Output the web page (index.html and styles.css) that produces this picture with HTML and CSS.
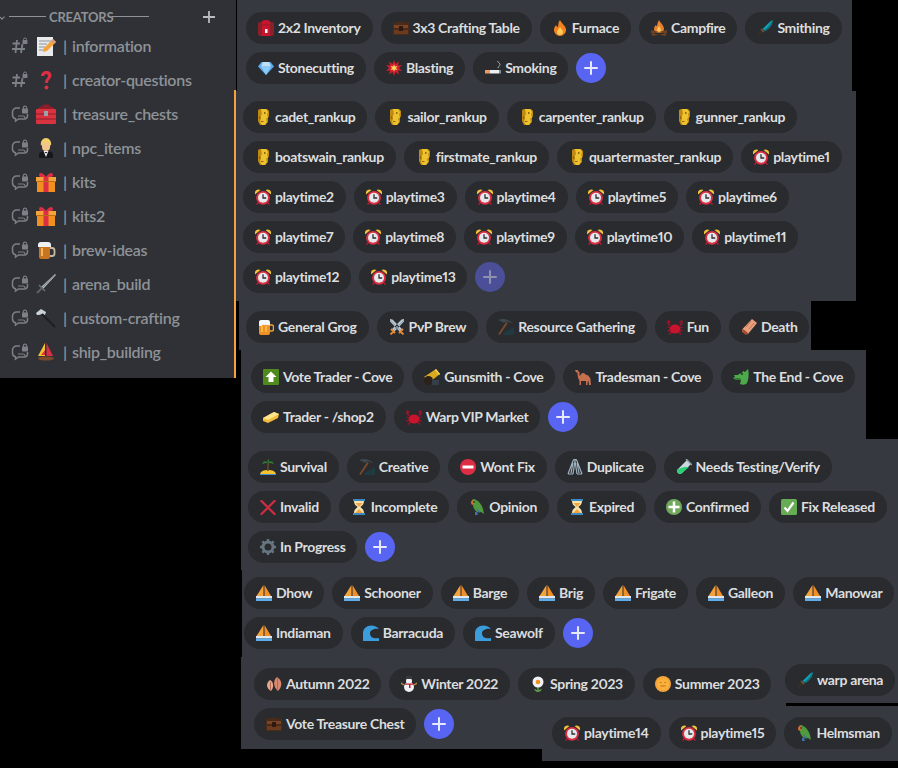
FILE: index.html
```html
<!DOCTYPE html>
<html lang="en">

<head>
    <meta charset="UTF-8">
    <title>forum tags</title>
    <link rel="stylesheet" href="styles.css">
</head>

<body>
    <svg class="defs" xmlns="http://www.w3.org/2000/svg">
        <symbol id="i-pack" viewBox="0 0 16 16"><path d="M3 4C3 1 5 0 8 0s5 1 5 4v12H3z" fill="#c8142c"/><rect x="0" y="2" width="4" height="14" rx="2" fill="#8c1f2a"/><rect x="12" y="2" width="4" height="14" rx="2" fill="#8c1f2a"/><rect x="7" y="9" width="2.500" height="4" fill="#fff"/><path d="M4 5h8" stroke="#8c1f2a"/></symbol>
        <symbol id="i-chest" viewBox="0 0 16 16"><rect x="0" y="2" width="16" height="13" fill="#4a2a18"/><rect x="1" y="5" width="14" height="3" fill="#7a4526"/><rect x="1" y="10" width="14" height="4" fill="#6b3b20"/><rect x="6" y="6" width="4" height="5" fill="#2e1a10"/><path d="M1 0h3v3H1zM12 0h3v3h-3z" fill="#2b2b2b"/></symbol>
        <symbol id="i-fire" viewBox="0 0 16 16"><path d="M8 0c1 3 5 5 6 9 .6 4-3 7-6 7s-6.500-3-6-7c.3-2 1.500-3 2-4 .5 1 1 2 2 2C6.500 5 6 2 8 0z" fill="#f4811f"/><path d="M8 7c1 2 3 3 3 5s-1.500 3-3 3-3-1-3-3 2-3 3-5z" fill="#fdcb58"/></symbol>
        <symbol id="i-camp" viewBox="0 0 16 16"><path d="M8 0c.5 2 5 5 5 9 0 2-2 4-5 4s-5-2-5-4c0-2 1-3 2-4 0 1 .5 1 1 1 0-2 1-4 2-6z" fill="#e9822c"/><path d="M8 6c.5 1 2 2.500 2 4s-1 2-2 2-2-.5-2-2 1.500-3 2-4z" fill="#fbc15a"/><path d="M0 14l16-4v3L2 16zM16 14L0 10v3l14 3z" fill="#6e4024"/></symbol>
        <symbol id="i-sword" viewBox="0 0 16 16"><path d="M15.500 0c.500 4-1.500 7-7 11L5.500 9C9 6 12 2 15.500 0z" fill="#12a0b4"/><path d="M15.500 0c0 4-2 7-7 11l-1-1c4-3 6-6 8-10z" fill="#0b6f80"/><path d="M5 9l2 2-5 5-1-1z" fill="#3a2f24"/><path d="M4 9l3 3" stroke="#6b5a3c" stroke-width="1.500"/></symbol>
        <symbol id="i-gem" viewBox="0 0 16 16"><path d="M3.500 2h9L16 6.500 8 15 0 6.500z" fill="#5dadec"/><path d="M5 2h6l2 4.500H3z" fill="#bde0f7"/><path d="M3 6.500h10L8 15z" fill="#8ccaf7"/></symbol>
        <symbol id="i-blast" viewBox="0 0 16 16"><path d="M8 0l1.500 4L13 1.500 12 5.500 16 5l-3 3 3 3-4-.5 1 4-3.500-2.500L8 16l-1.500-4L3 14.500l1-4-4 .5 3-3-3-3 4 .5-1-4L6.500 4z" fill="#d0202e"/><path d="M8 4.500l1 2 2.500-.5L10 8l1.500 2L9 9.500 8 11.500 7 9.500 4.500 10 6 8 4.500 6 7 6.500z" fill="#ffcf5c"/></symbol>
        <symbol id="i-smoke" viewBox="0 0 16 16"><rect x="0" y="10" width="5" height="3.500" fill="#f19a5e"/><rect x="5" y="10" width="9" height="3.500" fill="#eceff1"/><rect x="14" y="10" width="2" height="3.500" fill="#8a8d90"/><path d="M13 8c0-2 2-1.500 2-3.500S12 2 12.500 1" fill="none" stroke="#aab0b5" stroke-width="1"/></symbol>
        <symbol id="i-gold" viewBox="0 0 16 16"><path d="M3 1l2-1h7l2 2v5l-1 2v4l-3 3H5l-1-2-1-2V3z" fill="#c08a12"/><path d="M6 0h5l2 3-1 3 1 2-2 2 1 3-2 3H7l-2-3 1-3-1-2 2-3z" fill="#eec22e"/><path d="M4 7h1.500v3H4zM9 3h1.500v2H9zM6 12h2.500v1H6z" fill="#8f6810"/></symbol>
        <symbol id="i-clock" viewBox="0 0 16 16"><path d="M0 5.500a3.800 3.800 0 0 1 5.500-4.500zM16 5.500A3.800 3.800 0 0 0 10.500 1z" fill="#f5c33b"/><path d="M3 14l-1.500 1.500M13 14l1.500 1.500" stroke="#be1931" stroke-width="1.500"/><circle cx="8" cy="8.800" r="6.900" fill="#dd2e44"/><circle cx="8" cy="8.800" r="5" fill="#e6e9eb"/><path d="M8 5.300V9h3.200" fill="none" stroke="#292f33" stroke-width="1.300"/></symbol>
        <symbol id="i-beer" viewBox="0 0 16 16"><path d="M11 6h3a1.500 1.500 0 0 1 1.500 1.500v3A1.500 1.500 0 0 1 14 12h-3" fill="none" stroke="#f0a33a" stroke-width="1.500"/><path d="M1 4h11v10a2 2 0 0 1-2 2H3a2 2 0 0 1-2-2z" fill="#f19020"/><path d="M4 7v6M8 7v6" stroke="#fdcb58" stroke-width="1.300"/><path d="M1 6V2.500A2 2 0 0 1 3 1h7a2 2 0 0 1 2 2v3c-1 1-2 0-2-.5 0 1-2 1-2.500 0-.5 1-2 1-2.500 0-.5.5-1 1.500-2 1.500S1 7 1 6z" fill="#f5f8fa"/></symbol>
        <symbol id="i-swords" viewBox="0 0 16 16"><path d="M1 0l2.500.5L13 10l-2.500 2.500L1 2.500zM15 0l-2.500.5L3 10l2.500 2.500L15 2.500z" fill="#b9c6d0"/><path d="M1 1l11 11M15 1L4 12" stroke="#8fa0ad" stroke-width=".8"/><path d="M2 10l4 4M14 10l-4 4M4 13l-2.500 2.500M12 13l2.500 2.500" stroke="#e98a35" stroke-width="1.800"/></symbol>
        <symbol id="i-pick" viewBox="0 0 16 16"><path d="M5 14l11-6v8H6z" fill="#1f3a40"/><path d="M0 1C5-1 11 0 15 5c-3-2-5-2.500-7-2.500L6 4C4 2.500 2 2 0 1z" fill="#3d4a50"/><path d="M1 15.500L9 3.500" stroke="#7c4a2b" stroke-width="1.800"/></symbol>
        <symbol id="i-crab" viewBox="0 0 16 16"><ellipse cx="8" cy="10" rx="5.500" ry="4.500" fill="#c8142c"/><path d="M1 1c-1.500 2-1 5 2 6l.5-1.500C2.500 5 2 4 2.500 3L4 4c0-1.500-1-2.500-3-3zM15 1c1.500 2 1 5-2 6l-.5-1.500c1-.5 1.500-1.500 1-2.500L12 4c0-1.500 1-2.500 3-3z" fill="#a0122a"/><path d="M3 9L.5 8M3 11.500L.5 12M4 13.500L2 15.500M13 9l2.500-1M13 11.500l2.500.5M12 13.500l2 2" stroke="#a0122a" stroke-width="1.300"/></symbol>
        <symbol id="i-coffin" viewBox="0 0 16 16"><path d="M11 0l5 4L7 15H4L1 12.500 1.500 10z" fill="#e8a07c"/><path d="M5 8l5-6M8 10l5-6" stroke="#c9744f" stroke-width="1"/><path d="M1 12l3 3.500h3L7 14l-3-2.500-2.500-1.500z" fill="#a44a2e"/></symbol>
        <symbol id="i-up" viewBox="0 0 16 16"><rect width="16" height="16" rx="1" fill="#4f8a1f"/><path d="M8 2.500L13.500 8H10.500v5h-5V8H2.500z" fill="#fff"/></symbol>
        <symbol id="i-cannon" viewBox="0 0 16 16"><path d="M0 8L12 0l4 5-9 7z" fill="#d9aa20"/><path d="M11 1l4 5 1-1-4-5z" fill="#f2d35a"/><circle cx="4.500" cy="11.500" r="4.500" fill="#2c221a"/><rect x="8" y="11" width="7" height="5" fill="#33404a"/></symbol>
        <symbol id="i-camel" viewBox="0 0 16 16"><path d="M0 1h3v1l1.500 1v4c1 0 1.500-3 3.500-3s2.500 2 3.500 2 1.500 0 2.500 1.500 1.500 2 1.500 3l.5 5.500H14l-.5-4-1 1v3H11v-4H6v4H4.500v-4.500C3 10 2.500 7 2.500 3.500H1z" fill="#c66f4e"/></symbol>
        <symbol id="i-dragon" viewBox="0 0 16 16"><path d="M15 0c1 3 1 10-1 14-1 2-5 2-7 1l1-4c-3 0-6 0-8-2l2-1-1-2h4l1-1 3-1 1-2 2 1z" fill="#4ea94a"/><path d="M1 9l6 0 1 2H3z" fill="#2f7a34"/><circle cx="9" cy="5" r="1" fill="#163f1a"/></symbol>
        <symbol id="i-bar" viewBox="0 0 16 16"><path d="M0 9l11-6 5 2-1 4-10 5-5-2z" fill="#f4bc3c"/><path d="M0 9l11-6 5 2-11 6z" fill="#fce58a"/></symbol>
        <symbol id="i-island" viewBox="0 0 16 16"><path d="M0 16c0-4 4-5 8-5s8 1 8 5z" fill="#f4c430"/><path d="M0 15h16v1H0z" fill="#3f8fd0"/><path d="M7.500 4h1.500l-.5 8H7z" fill="#6b4a2a"/><path d="M8 4C6 1 3 2 2 5c2-1 4-1 6-1zM8 4c2-3 5-2 6 1-2-1-4-1-6-1zM8 4c-1-2-1-3 1-4 0 1 0 3-1 4z" fill="#2f7d32"/></symbol>
        <symbol id="i-noentry" viewBox="0 0 16 16"><circle cx="8" cy="8" r="8" fill="#dd2e44"/><rect x="2.500" y="6.500" width="11" height="3" fill="#fff"/></symbol>
        <symbol id="i-hands" viewBox="0 0 16 16"><path d="M1 15L6 2c.7-2 2.300-2 2 0L6 15M4 14l2-10M15 15L10 2C9.300 0 7.700 0 8 2l2 13M12 14L10 4M1 15h5M10 15h5" fill="none" stroke="#9fb3bf" stroke-width="1.200"/></symbol>
        <symbol id="i-tube" viewBox="0 0 16 16"><path d="M11 1l4 4L6 14a2.800 2.800 0 0 1-4-4z" fill="#ccd6dd"/><path d="M8 8h5l-7 6a2.800 2.800 0 0 1-4-4z" fill="#2fcf7a"/><path d="M10 0l6 6" stroke="#8fa0ad" stroke-width="1.500"/></symbol>
        <symbol id="i-cross" viewBox="0 0 16 16"><path d="M1.500 1L8 7.500 14.500 1 15.500 2 9 8.500l6.500 6.500-1 1L8 9.500 1.500 16 .5 15 7 8.500.5 2z" fill="#dd2e44" stroke="#dd2e44" stroke-width=".9"/></symbol>
        <symbol id="i-glass" viewBox="0 0 16 16"><rect x="2" y="0" width="12" height="2" fill="#3b88c3"/><rect x="2" y="14" width="12" height="2" fill="#3b88c3"/><path d="M3 2h10c0 4-3 5-3.500 6 .5 1 3.500 2 3.500 6H3c0-4 3-5 3.500-6C6 7 3 6 3 2z" fill="#f7e3b0"/><path d="M4.500 4h7L8 8zM8 10l4 4H4z" fill="#f4a43a"/></symbol>
        <symbol id="i-parrot" viewBox="0 0 16 16"><path d="M3 1a3 3 0 0 1 4 0c3 1 6 5 7 9l1 5-3-2c-2 1-5 0-6-2C4 9 4 6 4 5z" fill="#4f9a3d"/><path d="M2 4a2.500 2.500 0 0 1 3-3v4L3 6z" fill="#d96b36"/><path d="M7 9l5 4h-3zM6 13v3h3l-1-3z" fill="#3f6fb0"/><circle cx="5" cy="3" r=".8" fill="#111"/></symbol>
        <symbol id="i-plusg" viewBox="0 0 16 16"><circle cx="8" cy="8" r="8" fill="#70a85c"/><path d="M8 2.500v11M2.500 8h11" stroke="#fff" stroke-width="2.500"/></symbol>
        <symbol id="i-check" viewBox="0 0 16 16"><rect width="16" height="16" rx="1.500" fill="#67ab54"/><path d="M3.500 8.500L6.500 12 12.500 3.500" fill="none" stroke="#fff" stroke-width="2.200"/></symbol>
        <symbol id="i-gear" viewBox="0 0 16 16"><circle cx="8" cy="8" r="5" fill="none" stroke="#66757f" stroke-width="3"/><path d="M8 0v16M0 8h16M2.300 2.300l11.400 11.400M13.700 2.300L2.300 13.700" stroke="#66757f" stroke-width="2.400" stroke-dasharray="3 10 3"/></symbol>
        <symbol id="i-boat" viewBox="0 0 16 16"><path d="M7.500 0v11H.5z" fill="#f6a23b"/><path d="M8.500 0L15 11H8.500z" fill="#f18f2a"/><rect x="0" y="11" width="16" height="2.500" fill="#dfe8ee"/><rect x="0" y="13.500" width="16" height="2.500" fill="#5dadec"/></symbol>
        <symbol id="i-wave" viewBox="0 0 16 16"><path d="M16 4C13 0 6-1 2 3-1 6 0 11 0 16h16v-3c-4 1-9 0-9-5 0-3 5-5 9-4z" fill="#3c9ddc"/></symbol>
        <symbol id="i-leaves" viewBox="0 0 16 16"><path d="M11 1c5 3 6 9 1 14-5-4-5-11-1-14z" fill="#d98870"/><path d="M4 4c4 2 4 8 1 11C1 13-1 8 4 4z" fill="#e3a98f"/><path d="M11.500 2v13M4.500 6v9" stroke="#a85f49" stroke-width=".8"/></symbol>
        <symbol id="i-snow" viewBox="0 0 16 16"><circle cx="8" cy="11" r="5" fill="#f0f3f5"/><circle cx="8" cy="5" r="3" fill="#f0f3f5"/><rect x="5" y="0" width="6" height="3" fill="#33393d"/><rect x="4" y="7.500" width="8" height="1.200" fill="#c8142c"/><rect x="8" y="8" width="1.500" height="4" fill="#c8142c"/><path d="M3 9L0 7M13 9l3-2" stroke="#b98a3a" stroke-width="1.500"/></symbol>
        <symbol id="i-flower" viewBox="0 0 16 16"><path d="M8 10v6" stroke="#5c9e4a" stroke-width="1.500"/><path d="M4 13c2 0 3 1 4 2 1-1 2-2 4-2-1 2-2 3-4 3s-3-1-4-3z" fill="#5c9e4a"/><circle cx="8" cy="6" r="5.500" fill="#f0f2f3"/><circle cx="8" cy="6" r="2.300" fill="#f19020"/></symbol>
        <symbol id="i-sun" viewBox="0 0 16 16"><circle cx="8" cy="8" r="8" fill="#f4a43a" /><circle cx="8" cy="8" r="6" fill="#fbb03b"/><path d="M5 6.500h1.500M9.500 6.500H11M5.500 10h5" stroke="#b86f12" stroke-width="1"/></symbol>

        <symbol id="i-memo" viewBox="0 0 20 20"><rect x="1" y="1" width="16" height="19" fill="#e8eaec"/><path d="M3 5h12M3 8h8M3 11h6M3 14h5" stroke="#8a959d" stroke-width="1"/><path d="M17 3l3 3-9 9-4 1 1-4z" fill="#f4a43a"/><path d="M17 3l3 3-2 2-3-3z" fill="#d99e82"/></symbol>
        <symbol id="i-quest" viewBox="0 0 20 20"><path d="M5 6c0-3 2.500-5 5.500-5s5 2 5 4.500c0 3-3.500 4-3.500 7.500H9c0-4 3-5 3-7 0-1-.5-2-1.700-2C9 4 8.300 5 8.300 6z" fill="#dd2e44"/><circle cx="10.500" cy="17.500" r="2" fill="#dd2e44"/></symbol>
        <symbol id="i-toolbox" viewBox="0 0 20 20"><path d="M7 3V1h6v2M1 6l3-3h12l3 3" fill="#8c1f2a" stroke="#8c1f2a"/><rect y="5" width="20" height="15" rx="1" fill="#d9333f"/><path d="M0 10h20M0 15h20" stroke="#8c1f2a"/><rect x="8" y="7" width="4" height="5" fill="#9aa3a9"/></symbol>
        <symbol id="i-person" viewBox="0 0 20 20"><path d="M5 8c-1-5 2-8 5-8s6 3 5 8l-2-3H7z" fill="#f4d06a"/><path d="M6 5h8v4a4 4 0 0 1-8 0z" fill="#f3c48e"/><path d="M3 20v-3c0-3 3-4 7-4s7 1 7 4v3z" fill="#15171a"/><path d="M7.500 13h5L10 19z" fill="#eef1f3"/><path d="M8.500 14h3L10 15.500z" fill="#111"/></symbol>
        <symbol id="i-gift" viewBox="0 0 20 20"><path d="M10 5C7 0 3 0 3 3s4 2 7 2c3 0 7 1 7-2s-4-3-7 2z" fill="#dd2e44"/><rect x="0" y="5" width="20" height="5" fill="#f4a43a"/><rect x="1" y="9" width="18" height="11" fill="#f19020"/><rect x="7.500" y="5" width="5" height="15" fill="#dd2e44"/><path d="M0 9.500h20" stroke="#b86f12"/></symbol>
        <symbol id="i-mug" viewBox="0 0 20 20"><path d="M13 8h3a2.500 2.500 0 0 1 2.500 2.500v3A2.500 2.500 0 0 1 16 16h-3" fill="none" stroke="#c7b9a0" stroke-width="1.800"/><rect x="3" y="5" width="11" height="14" rx="2" fill="#c9741f"/><path d="M6 8v8" stroke="#f0b560" stroke-width="2"/><path d="M2 5a3 3 0 0 1 3-3h7a3 3 0 0 1 3 3v2H2z" fill="#eef1f3"/></symbol>
        <symbol id="i-dagger" viewBox="0 0 20 20"><path d="M19 0l1 1L7 15l-2-2z" fill="#b4bec5"/><path d="M19 .5L6 14" stroke="#68737b" stroke-width=".8"/><path d="M3 11l6 6" stroke="#6a7177" stroke-width="1.500"/><path d="M6 14l-5 5" stroke="#5b6167" stroke-width="2"/></symbol>
        <symbol id="i-hammer" viewBox="0 0 20 20"><path d="M0 5l5-4 5 3-1 3-3-1-3 1-2 0z" fill="#c9d2d8"/><path d="M6 6L19 19" stroke="#1d1f21" stroke-width="2"/></symbol>
        <symbol id="i-sail" viewBox="0 0 20 20"><path d="M9 1v13H2z" fill="#f4c430"/><path d="M10.500 1L17 14h-6.500z" fill="#dd2e44"/><path d="M5 13l4-5v5zM13 6l2 7h-3z" fill="#dd2e44"/><ellipse cx="10" cy="16.500" rx="8" ry="2" fill="#7a4a2a"/></symbol>

        <symbol id="i-hash" viewBox="0 0 18 18"><path d="M4.500 16L6 3M10 16l1.500-9M1.500 6.500H9M1 12h13" fill="none" stroke="#7c8087" stroke-width="1.800"/><rect x="11.500" y="3" width="5" height="4" rx=".8" fill="#7c8087"/><path d="M12.500 3.500V2.500a1.500 1.500 0 0 1 3 0v1" fill="none" stroke="#7c8087"/></symbol>
        <symbol id="i-thread" viewBox="0 0 18 18"><path d="M9 3H5.500A4 4 0 0 0 1.500 7v3a4 4 0 0 0 3 3.800V16l3-2h6a3 3 0 0 0 3-3V9" fill="none" stroke="#7c8087" stroke-width="1.500"/><path d="M7 11h5a2 2 0 0 1 2 2" fill="none" stroke="#7c8087" stroke-width="1.200"/><rect x="11" y="3.500" width="6" height="5" rx=".8" fill="#7c8087"/><path d="M12.300 4V2.800a1.700 1.700 0 0 1 3.400 0V4" fill="none" stroke="#7c8087" stroke-width="1.100"/></symbol>
        <symbol id="i-add" viewBox="0 0 16 16"><path d="M8 2v12M2 8h12" stroke="currentColor" stroke-width="1.800"/></symbol>
    </svg>

    <div class="sidebar">
        <div class="cat">
            <span class="chev"></span>
            <span class="dash"></span>
            <span class="cat-name">CREATORS</span>
            <span class="dash"></span>
            <svg class="cat-add"><use href="#i-add"/></svg>
        </div>
        <div class="chan"><svg class="kind"><use href="#i-hash"/></svg><svg class="emo"><use href="#i-memo"/></svg><span class="bar">|</span>information</div>
        <div class="chan"><svg class="kind"><use href="#i-hash"/></svg><svg class="emo"><use href="#i-quest"/></svg><span class="bar">|</span>creator-questions</div>
        <div class="chan"><svg class="kind"><use href="#i-thread"/></svg><svg class="emo"><use href="#i-toolbox"/></svg><span class="bar">|</span>treasure_chests</div>
        <div class="chan"><svg class="kind"><use href="#i-thread"/></svg><svg class="emo"><use href="#i-person"/></svg><span class="bar">|</span>npc_items</div>
        <div class="chan"><svg class="kind"><use href="#i-thread"/></svg><svg class="emo"><use href="#i-gift"/></svg><span class="bar">|</span>kits</div>
        <div class="chan"><svg class="kind"><use href="#i-thread"/></svg><svg class="emo"><use href="#i-gift"/></svg><span class="bar">|</span>kits2</div>
        <div class="chan"><svg class="kind"><use href="#i-thread"/></svg><svg class="emo"><use href="#i-mug"/></svg><span class="bar">|</span>brew-ideas</div>
        <div class="chan"><svg class="kind"><use href="#i-thread"/></svg><svg class="emo"><use href="#i-dagger"/></svg><span class="bar">|</span>arena_build</div>
        <div class="chan"><svg class="kind"><use href="#i-thread"/></svg><svg class="emo"><use href="#i-hammer"/></svg><span class="bar">|</span>custom-crafting</div>
        <div class="chan"><svg class="kind"><use href="#i-thread"/></svg><svg class="emo"><use href="#i-sail"/></svg><span class="bar">|</span>ship_building</div>
    </div>
    <div class="accent"></div>

    <div class="panel p1">
        <div class="row">
            <span class="tag"><svg><use href="#i-pack"/></svg>2x2 Inventory</span>
            <span class="tag"><svg><use href="#i-chest"/></svg>3x3 Crafting Table</span>
            <span class="tag"><svg><use href="#i-fire"/></svg>Furnace</span>
            <span class="tag"><svg><use href="#i-camp"/></svg>Campfire</span>
            <span class="tag"><svg><use href="#i-sword"/></svg>Smithing</span>
        </div>
        <div class="row">
            <span class="tag"><svg><use href="#i-gem"/></svg>Stonecutting</span>
            <span class="tag"><svg><use href="#i-blast"/></svg>Blasting</span>
            <span class="tag"><svg><use href="#i-smoke"/></svg>Smoking</span>
            <span class="add"><svg><use href="#i-add"/></svg></span>
        </div>
    </div>

    <div class="panel p2">
        <div class="row">
            <span class="tag"><svg><use href="#i-gold"/></svg>cadet_rankup</span>
            <span class="tag"><svg><use href="#i-gold"/></svg>sailor_rankup</span>
            <span class="tag"><svg><use href="#i-gold"/></svg>carpenter_rankup</span>
            <span class="tag"><svg><use href="#i-gold"/></svg>gunner_rankup</span>
        </div>
        <div class="row">
            <span class="tag"><svg><use href="#i-gold"/></svg>boatswain_rankup</span>
            <span class="tag"><svg><use href="#i-gold"/></svg>firstmate_rankup</span>
            <span class="tag"><svg><use href="#i-gold"/></svg>quartermaster_rankup</span>
            <span class="tag"><svg><use href="#i-clock"/></svg>playtime1</span>
        </div>
        <div class="row">
            <span class="tag"><svg><use href="#i-clock"/></svg>playtime2</span>
            <span class="tag"><svg><use href="#i-clock"/></svg>playtime3</span>
            <span class="tag"><svg><use href="#i-clock"/></svg>playtime4</span>
            <span class="tag"><svg><use href="#i-clock"/></svg>playtime5</span>
            <span class="tag"><svg><use href="#i-clock"/></svg>playtime6</span>
        </div>
        <div class="row">
            <span class="tag"><svg><use href="#i-clock"/></svg>playtime7</span>
            <span class="tag"><svg><use href="#i-clock"/></svg>playtime8</span>
            <span class="tag"><svg><use href="#i-clock"/></svg>playtime9</span>
            <span class="tag"><svg><use href="#i-clock"/></svg>playtime10</span>
            <span class="tag"><svg><use href="#i-clock"/></svg>playtime11</span>
        </div>
        <div class="row">
            <span class="tag"><svg><use href="#i-clock"/></svg>playtime12</span>
            <span class="tag"><svg><use href="#i-clock"/></svg>playtime13</span>
            <span class="add off"><svg><use href="#i-add"/></svg></span>
        </div>
    </div>

    <div class="panel p3">
        <div class="row">
            <span class="tag"><svg><use href="#i-beer"/></svg>General Grog</span>
            <span class="tag"><svg><use href="#i-swords"/></svg>PvP Brew</span>
            <span class="tag"><svg><use href="#i-pick"/></svg>Resource Gathering</span>
            <span class="tag"><svg><use href="#i-crab"/></svg>Fun</span>
            <span class="tag"><svg><use href="#i-coffin"/></svg>Death</span>
        </div>
    </div>

    <div class="panel p4">
        <div class="row">
            <span class="tag"><svg><use href="#i-up"/></svg>Vote Trader - Cove</span>
            <span class="tag"><svg><use href="#i-cannon"/></svg>Gunsmith - Cove</span>
            <span class="tag"><svg><use href="#i-camel"/></svg>Tradesman - Cove</span>
            <span class="tag"><svg><use href="#i-dragon"/></svg>The End - Cove</span>
        </div>
        <div class="row">
            <span class="tag"><svg><use href="#i-bar"/></svg>Trader - /shop2</span>
            <span class="tag"><svg><use href="#i-crab"/></svg>Warp VIP Market</span>
            <span class="add"><svg><use href="#i-add"/></svg></span>
        </div>
    </div>

    <div class="panel p5">
        <div class="row">
            <span class="tag"><svg><use href="#i-island"/></svg>Survival</span>
            <span class="tag"><svg><use href="#i-pick"/></svg>Creative</span>
            <span class="tag"><svg><use href="#i-noentry"/></svg>Wont Fix</span>
            <span class="tag"><svg><use href="#i-hands"/></svg>Duplicate</span>
            <span class="tag"><svg><use href="#i-tube"/></svg>Needs Testing/Verify</span>
        </div>
        <div class="row">
            <span class="tag"><svg><use href="#i-cross"/></svg>Invalid</span>
            <span class="tag"><svg><use href="#i-glass"/></svg>Incomplete</span>
            <span class="tag"><svg><use href="#i-parrot"/></svg>Opinion</span>
            <span class="tag"><svg><use href="#i-glass"/></svg>Expired</span>
            <span class="tag"><svg><use href="#i-plusg"/></svg>Confirmed</span>
            <span class="tag"><svg><use href="#i-check"/></svg>Fix Released</span>
        </div>
        <div class="row">
            <span class="tag"><svg><use href="#i-gear"/></svg>In Progress</span>
            <span class="add"><svg><use href="#i-add"/></svg></span>
        </div>
    </div>

    <div class="panel p6">
        <div class="row">
            <span class="tag"><svg><use href="#i-boat"/></svg>Dhow</span>
            <span class="tag"><svg><use href="#i-boat"/></svg>Schooner</span>
            <span class="tag"><svg><use href="#i-boat"/></svg>Barge</span>
            <span class="tag"><svg><use href="#i-boat"/></svg>Brig</span>
            <span class="tag"><svg><use href="#i-boat"/></svg>Frigate</span>
            <span class="tag"><svg><use href="#i-boat"/></svg>Galleon</span>
            <span class="tag"><svg><use href="#i-boat"/></svg>Manowar</span>
        </div>
        <div class="row">
            <span class="tag"><svg><use href="#i-boat"/></svg>Indiaman</span>
            <span class="tag"><svg><use href="#i-wave"/></svg>Barracuda</span>
            <span class="tag"><svg><use href="#i-wave"/></svg>Seawolf</span>
            <span class="add"><svg><use href="#i-add"/></svg></span>
        </div>
    </div>

    <div class="panel p7">
        <div class="row">
            <span class="tag"><svg><use href="#i-leaves"/></svg>Autumn 2022</span>
            <span class="tag"><svg><use href="#i-snow"/></svg>Winter 2022</span>
            <span class="tag"><svg><use href="#i-flower"/></svg>Spring 2023</span>
            <span class="tag"><svg><use href="#i-sun"/></svg>Summer 2023</span>
        </div>
        <div class="row">
            <span class="tag"><svg><use href="#i-chest"/></svg>Vote Treasure Chest</span>
            <span class="add"><svg><use href="#i-add"/></svg></span>
        </div>
    </div>

    <div class="panel p8">
        <div class="row">
            <span class="tag"><svg><use href="#i-sword"/></svg>warp arena</span>
        </div>
    </div>

    <div class="panel p9">
        <div class="row">
            <span class="tag"><svg><use href="#i-clock"/></svg>playtime14</span>
            <span class="tag"><svg><use href="#i-clock"/></svg>playtime15</span>
            <span class="tag"><svg><use href="#i-parrot"/></svg>Helmsman</span>
        </div>
    </div>
</body>

</html>
```

FILE: styles.css
```css
html,
body {
    margin: 0;
    height: 768px;
    overflow: hidden;
    background-color: #000;
    font-family: "Lato", "Liberation Sans", sans-serif;
}

.defs {
    display: none;
}

/* left channel list */
.sidebar {
    position: absolute;
    left: 0;
    top: 0;
    width: 236px;
    height: 378px;
    padding-top: 3px;
    box-sizing: border-box;
    background-color: #2f3136;
    color: #8e9297;
}

.accent {
    position: absolute;
    left: 234px;
    top: 90px;
    width: 2px;
    height: 288px;
    background-color: #f8a13c;
}

.cat {
    display: flex;
    align-items: center;
    height: 27px;
    font-size: 13px;
    font-weight: 700;
    letter-spacing: -0.2px;
}

.chev {
    width: 3px;
    height: 3px;
    margin: 0 5px 0 0;
    border-right: 1px solid #8e9297;
    border-bottom: 1px solid #8e9297;
    transform: rotate(45deg);
}

.dash {
    width: 37px;
    height: 1px;
    background-color: #8e9297;
}

.cat-name {
    width: 63px;
    margin-left: 3px;
}

.cat-add {
    width: 16px;
    height: 16px;
    margin-left: 52px;
    color: #b9bbbe;
}

.chan {
    display: flex;
    align-items: center;
    height: 34px;
    box-sizing: border-box;
    padding: 0 0 4px 11px;
    font-size: 16px;
    font-weight: 600;
    letter-spacing: -0.3px;
    white-space: nowrap;
}

.kind {
    width: 18px;
    height: 18px;
    margin-top: 2px;
}

.emo {
    width: 20px;
    height: 20px;
    margin: 2px 0 0 7px;
}

.bar {
    width: 9px;
    margin-left: 7px;
}

/* tag panels, pasted together on the black canvas */
.panel {
    position: absolute;
    box-sizing: border-box;
    background-color: #36393f;
}

.p1 { left: 237px; top: 0; width: 615px; height: 91px; padding: 12px 9px; }
.p2 { left: 236px; top: 91px; width: 620px; height: 210px; padding: 10px 7px; }
.p3 { left: 239px; top: 301px; width: 572px; height: 49px; padding: 10px 7px; }
.p4 { left: 241px; top: 350px; width: 625px; height: 89px; padding: 11px 10px; }
.p5 { left: 241px; top: 439px; width: 657px; height: 131px; padding: 12px 7px; }
.p6 { left: 242px; top: 570px; width: 656px; height: 87px; padding: 7px 2px; }
.p7 { left: 241px; top: 657px; width: 545px; height: 92px; padding: 11px 13px; }
.p8 { left: 785px; top: 657px; width: 113px; height: 46px; padding: 7px 0; }
.p9 { left: 542px; top: 706px; width: 356px; height: 55px; padding: 11px 10px; }

.row {
    display: flex;
    align-items: center;
    gap: 8px;
    margin-bottom: 8px;
}

.tag {
    display: flex;
    align-items: center;
    gap: 4px;
    height: 32px;
    box-sizing: border-box;
    padding: 0 12px 2px;
    border-radius: 16px;
    background-color: #292b2f;
    color: #dcddde;
    font-size: 14px;
    font-weight: 700;
    font-variant-numeric: proportional-nums;
    letter-spacing: -0.33px;
    white-space: nowrap;
}

.tag svg {
    width: 16px;
    height: 16px;
    margin-top: 2px;
    flex: none;
}

.add {
    display: flex;
    align-items: center;
    justify-content: center;
    width: 30px;
    height: 30px;
    border-radius: 50%;
    background-color: #5865f2;
    color: #e6e8fd;
}

.add svg {
    width: 18px;
    height: 18px;
}

.add.off {
    background-color: #4a4f97;
    color: #8e90ad;
}
```
